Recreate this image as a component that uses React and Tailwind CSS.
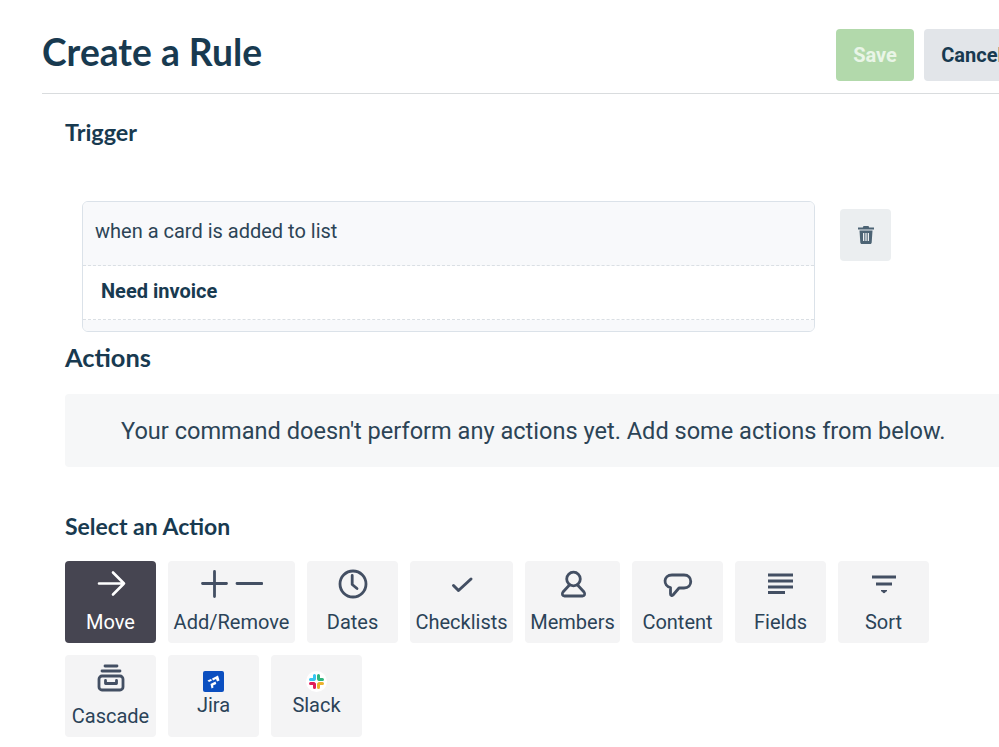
const roboto = { fontFamily: 'Roboto, sans-serif' };
const lato = { fontFamily: 'Lato, sans-serif' };

function ArrowIcon() {
  return (
    <svg width="30" height="30" viewBox="0 0 30 30" fill="none" stroke="currentColor" strokeWidth="2.600" strokeLinecap="round" strokeLinejoin="round">
      <path d="M3 14.500h25M17 3.500l11 11-11 11" />
    </svg>
  );
}

function AddRemoveIcon() {
  return (
    <svg width="62" height="30" viewBox="0 0 62 30" fill="none" stroke="currentColor" strokeWidth="2.800" strokeLinecap="round">
      <path d="M1.500 14.500h24M13.500 2.500v25M36 14.500h25" />
    </svg>
  );
}

function ClockIcon() {
  return (
    <svg width="30" height="30" viewBox="0 0 30 30" fill="none" stroke="currentColor" strokeWidth="2.800" strokeLinecap="round" strokeLinejoin="round">
      <circle cx="15" cy="15" r="13" />
      <path d="M14.200 6.500v9l4.800 4" />
    </svg>
  );
}

function CheckIcon() {
  return (
    <svg width="30" height="30" viewBox="0 0 30 30" fill="none" stroke="currentColor" strokeWidth="3" strokeLinecap="round" strokeLinejoin="round">
      <path d="M6.500 16.500l5 5L24 10" />
    </svg>
  );
}

function MemberIcon() {
  return (
    <svg width="30" height="30" viewBox="0 0 30 30" fill="none" stroke="currentColor" strokeWidth="2.800" strokeLinecap="round" strokeLinejoin="round">
      <circle cx="15.500" cy="10" r="6.800" />
      <path d="M11 16.500L5 23c-1.500 2-.5 4 1.500 4h18c2 0 3-2 1.500-4l-6-6.500" />
    </svg>
  );
}

function CommentIcon() {
  return (
    <svg width="30" height="30" viewBox="0 0 30 30" fill="none" stroke="currentColor" strokeWidth="2.800" strokeLinecap="round" strokeLinejoin="round">
      <path d="M9 6h12c9 0 9 13 0 13h-5l-6 7c-1 1-2.500.5-2.500-1v-6.500C0 17 0 6 9 6z" />
    </svg>
  );
}

function FieldsIcon() {
  return (
    <svg width="30" height="30" viewBox="0 0 30 30" fill="none" stroke="currentColor" strokeWidth="2.800">
      <path d="M2 6h25M2 12h25M2 18h25M2 23.500h17" />
    </svg>
  );
}

function SortIcon() {
  return (
    <svg width="30" height="30" viewBox="0 0 30 30" fill="none" stroke="currentColor" strokeWidth="2.800">
      <path d="M3 8h24M7 15h16" />
      <path d="M12 21.500h6l-3 2.500z" fill="currentColor" strokeWidth="1" strokeLinejoin="round" />
    </svg>
  );
}

function CascadeIcon() {
  return (
    <svg width="30" height="30" viewBox="0 0 30 30" fill="none" stroke="currentColor" strokeWidth="2.800" strokeLinecap="round" strokeLinejoin="round">
      <path d="M9 3h12M6 8h18" />
      <rect x="3" y="13" width="24" height="14" rx="3" />
      <path d="M9.500 17.500v3h11v-3" />
    </svg>
  );
}

function JiraIcon() {
  return (
    <svg width="21" height="21" viewBox="0 0 21 21" className="mt-[6px]">
      <rect width="21" height="21" rx="2" fill="#0b4fc0" />
      <path d="M4.500 9.500l3.500-1.500 1 1.500-3 1.500zM9 7.500l6-3 1.500 5-2.500 1-1-2.500-3 1.500zM7.500 13l5-2.500.8 2.500-3.300 1.500.5 2-2 1z" fill="#fff" />
    </svg>
  );
}

function SlackIcon() {
  return (
    <svg width="21" height="21" viewBox="0 0 21 21" fill="none" strokeWidth="3" strokeLinecap="round" className="mt-[6px]">
      <circle cx="10.500" cy="10.500" r="10.500" fill="#fff" />
      <path d="M8.500 4.500V8M4.500 8.500H8" stroke="#36c5f0" />
      <path d="M12.500 4.500V8M13 8.500h3.500" stroke="#2eb67d" />
      <path d="M12.500 16.500V13M13 12.500h3.500" stroke="#ecb22e" />
      <path d="M8.500 16.500V13M4.500 12.500H8" stroke="#e01e5a" />
    </svg>
  );
}

function ActionTile({ label, icon, width, active, labelClass = 'mt-[9px]' }) {
  return (
    <div
      className={`flex h-[82px] flex-col items-center rounded pt-2 text-[20px] leading-[28px] ${width} ${active ? 'bg-[#464551] text-white' : 'bg-[#f4f4f5] text-[#2b4358]'}`}
      style={roboto}
    >
      <div className={`flex h-[30px] items-center justify-center ${active ? 'text-white' : 'text-[#434f63]'}`}>{icon}</div>
      <span className={labelClass}>{label}</span>
    </div>
  );
}

export default function App() {
  return (
    <div className="h-[747px] w-[999px] overflow-hidden bg-white pl-[42px] text-[#183a50]">
      <div className="flex h-[94px] w-[1000px] items-start justify-between border-b border-[#d9dcde]">
        <h1 className="mt-[29px] text-[37.200px] font-bold leading-[46px]" style={lato}>Create a Rule</h1>
        <div className="mr-[22px] mt-[29px] flex gap-[10px] text-[20px] font-bold" style={roboto}>
          <button className="h-[52px] w-[78px] rounded bg-[#b2d9ab] text-[#e9f5e7]">Save</button>
          <button className="h-[52px] w-[96px] rounded bg-[#e2e5e9] text-[#183a50]">Cancel</button>
        </div>
      </div>

      <div className="pl-[23px]">
        <h2 className="mt-[23px] text-[23.400px] font-bold leading-[30px]" style={lato}>Trigger</h2>

        <div className="mt-[54px] flex items-start pl-[17px]">
          <div className="w-[733px] overflow-hidden rounded-md border border-[#dbe2e9]" style={roboto}>
            <div className="flex h-[64px] items-center border-b border-dashed border-[#dadfe4] bg-[#f8f9fb] pb-[6px] pl-[12px] text-[20px] text-[#2c4456]">when a card is added to list</div>
            <div className="flex h-[54px] items-center border-b border-dashed border-[#dadfe4] pb-[4px] pl-[18px] text-[20px] font-bold text-[#183a50]">Need invoice</div>
            <div className="h-[11px] bg-[#f8f9fb]" />
          </div>
          <button className="ml-[25px] mt-[8px] flex h-[52px] w-[51px] items-center justify-center rounded bg-[#ebeef0]">
            <svg width="16" height="18" viewBox="0 0 16 18" fill="#4c6374">
              <path d="M5.500 0h5l.7 1.500H16V3.500H0V1.500h4.800zM1.500 4.500h13L13.700 16.500c0 .8-.7 1.500-1.500 1.500H3.800c-.8 0-1.500-.7-1.500-1.500zM5 7v8h1.300V7zm2.350 0v8h1.300V7zM9.700 7v8H11V7z" fillRule="evenodd" />
            </svg>
          </button>
        </div>

        <h2 className="mt-[9px] text-[25.400px] font-bold leading-[32px]" style={lato}>Actions</h2>
        <div className="mt-[21px] flex h-[73px] w-[980px] items-center rounded bg-[#f6f7f8] pl-[56px] pt-[2px] text-[23.570px] text-[#2c4456]" style={roboto}>
          Your command doesn't perform any actions yet. Add some actions from below.
        </div>

        <h2 className="mt-[44px] text-[23px] font-bold leading-[30px]" style={lato}>Select an Action</h2>

        <div className="mt-[20px] flex w-[880px] flex-wrap gap-x-[12px] gap-y-[12px]">
          <ActionTile label="Move" icon={<ArrowIcon />} width="w-[91px]" active />
          <ActionTile label="Add/Remove" icon={<AddRemoveIcon />} width="w-[127px]" />
          <ActionTile label="Dates" icon={<ClockIcon />} width="w-[91px]" />
          <ActionTile label="Checklists" icon={<CheckIcon />} width="w-[103px]" />
          <ActionTile label="Members" icon={<MemberIcon />} width="w-[95px]" />
          <ActionTile label="Content" icon={<CommentIcon />} width="w-[91px]" />
          <ActionTile label="Fields" icon={<FieldsIcon />} width="w-[91px]" />
          <ActionTile label="Sort" icon={<SortIcon />} width="w-[91px]" />
          <ActionTile label="Cascade" icon={<CascadeIcon />} width="w-[91px]" />
          <ActionTile label="Jira" icon={<JiraIcon />} width="w-[91px]" labelClass="mt-[-2px]" />
          <ActionTile label="Slack" icon={<SlackIcon />} width="w-[91px]" labelClass="mt-[-2px]" />
        </div>
      </div>
    </div>
  );
}
